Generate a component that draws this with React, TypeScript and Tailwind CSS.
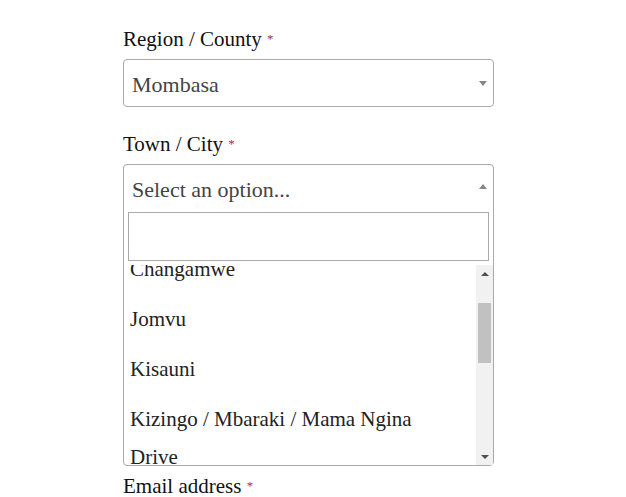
function Label({ text }: { text: string }) {
  return (
    <label className="block h-[30px] text-[21px] leading-[30px] text-[#111]">
      {text} <abbr className="text-[13px] align-top no-underline text-[#b22a3a]">*</abbr>
    </label>
  );
}

function Caret({ up = false }: { up?: boolean }) {
  return (
    <span
      className={
        up
          ? 'block w-0 h-0 border-x-[4px] border-x-transparent border-b-[5px] border-b-[#888]'
          : 'block w-0 h-0 border-x-[4px] border-x-transparent border-t-[5px] border-t-[#888]'
      }
    />
  );
}

export default function App() {
  const options = ['Changamwe', 'Jomvu', 'Kisauni'];

  return (
    <div className="w-[626px] h-[497px] bg-white overflow-hidden font-['Liberation_Serif','Times_New_Roman',serif]">
      <div className="ml-[123px] w-[371px] pt-[24px]">
        <Label text="Region / County" />
        <div className="mt-[5px] h-[48px] border border-[#aaa] rounded-[4px] flex items-center pl-[8px] pr-[6px]">
          <span className="flex-1 text-[22px] text-[#444] pt-[2px]">Mombasa</span>
          <Caret />
        </div>

        <div className="mt-[22px]">
          <Label text="Town / City" />
        </div>
        <div className="mt-[5px] border border-[#aaa] rounded-[4px]">
          <div className="h-[43px] flex items-center pl-[8px] pr-[6px]">
            <span className="flex-1 text-[22px] text-[#444] pt-[5px]">Select an option...</span>
            <Caret up />
          </div>
          <div className="px-[4px] pt-[4px]">
            <div className="h-[49px] border border-[#aaa] bg-white" />
          </div>
          <div className="mt-[4px] h-[200px] flex overflow-hidden">
            <div className="flex-1 overflow-hidden">
              <ul className="-mt-[21px] text-[21px] text-[#222]">
                {options.map((o) => (
                  <li key={o} className="pl-[6px] py-[6px] leading-[38px]">
                    {o}
                  </li>
                ))}
                <li className="pl-[6px] py-[6px] leading-[38px]">
                  Kizingo / Mbaraki / Mama Ngina
                  <br />
                  Drive
                </li>
              </ul>
            </div>
            <div className="w-[17px] bg-[#f1f1f1] flex flex-col items-center">
              <div className="h-[17px] flex items-center justify-center">
                <span className="block w-0 h-0 border-x-[4px] border-x-transparent border-b-[4px] border-b-[#505050]" />
              </div>
              <div className="mt-[21px] w-[13px] h-[60px] bg-[#c1c1c1]" />
              <div className="flex-1" />
              <div className="h-[17px] flex items-center justify-center">
                <span className="block w-0 h-0 border-x-[4px] border-x-transparent border-t-[4px] border-t-[#505050]" />
              </div>
            </div>
          </div>
        </div>

        <div className="mt-[5px]">
          <Label text="Email address" />
        </div>
      </div>
    </div>
  );
}
